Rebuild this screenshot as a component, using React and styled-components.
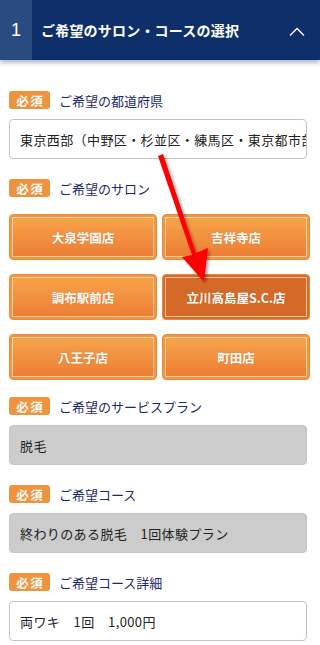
import React from "react";
import styled, { createGlobalStyle } from "styled-components";

const GlobalStyle = createGlobalStyle`
  html, body {
    margin: 0;
    padding: 0;
    background: #fff;
  }
  body {
    font-family: "Noto Sans CJK JP", "Liberation Sans", sans-serif;
  }
`;

const Page = styled.div`
  width: 320px;
  position: relative;
  overflow: hidden;
`;

const Header = styled.div`
  height: 60px;
  display: flex;
  align-items: center;
  background: #0f2f6b;
  color: #fff;
  box-shadow: 0 3px 4px rgba(40, 60, 110, 0.35);
  position: relative;
  z-index: 1;
`;

const Step = styled.div`
  width: 32px;
  height: 100%;
  display: flex;
  align-items: center;
  justify-content: center;
  background: #2a4b7f;
  font-family: "Liberation Sans", sans-serif;
  font-size: 18px;
`;

const Title = styled.div`
  flex: 1;
  padding-left: 9px;
  font-size: 14px;
  font-weight: 700;
  letter-spacing: 0.2px;
`;

const Chevron = styled.div`
  width: 46px;
  display: flex;
  justify-content: center;
  padding-top: 2px;
`;

const Body = styled.div`
  padding: 31px 13px 4px 9px;
  display: flex;
  flex-direction: column;
`;

const Field = styled.div`
  display: flex;
  flex-direction: column;
  margin-bottom: 20px;
`;

const LabelRow = styled.div`
  display: flex;
  align-items: center;
  gap: 9px;
  height: 18px;
  margin-bottom: 10px;
`;

const Badge = styled.span`
  width: 41px;
  height: 18px;
  border-radius: 3px;
  background: #f0933e;
  color: #fff;
  font-size: 12.5px;
  font-weight: 700;
  display: flex;
  align-items: center;
  justify-content: center;
  letter-spacing: 1.5px;
  text-indent: 1.5px;
`;

const LabelText = styled.span`
  color: #1c2a6b;
  font-size: 13px;
`;

const Box = styled.div`
  height: 40px;
  box-sizing: border-box;
  border: 1px solid ${(p) => (p.$disabled ? "#c6c6c6" : "#c4c4c4")};
  border-radius: 4px;
  background: ${(p) => (p.$disabled ? "#cccccc" : "#fff")};
  display: flex;
  align-items: center;
  padding-left: 10px;
  font-size: 13px;
  letter-spacing: 0.4px;
  color: #222;
  white-space: nowrap;
  overflow: hidden;
`;

const ButtonGrid = styled.div`
  display: grid;
  grid-template-columns: 1fr 1fr;
  column-gap: 5px;
  row-gap: 14px;
  margin-right: -3px;
  margin-top: 7px;
  margin-bottom: 17px;
`;

const SalonButton = styled.div`
  height: 46px;
  box-sizing: border-box;
  border-radius: 4px;
  border: 1px solid #ec8a3a;
  background: ${(p) =>
    p.$active ? "#d56a28" : "linear-gradient(#f7a64c, #ec7b34)"};
  box-shadow: inset 0 0 0 2px ${(p) => (p.$active ? "#d56a28" : "#f3973f")},
    inset 0 0 0 3px rgba(255, 230, 200, 0.75);
  color: #fff;
  font-size: 12.5px;
  font-weight: 700;
  display: flex;
  align-items: center;
  justify-content: center;
  text-shadow: 0 0 1px rgba(160, 70, 10, 0.4);
`;

const Arrow = styled.svg`
  position: absolute;
  left: 0;
  top: 0;
  pointer-events: none;
  z-index: 2;
`;

const salons = [
  { name: "大泉学園店" },
  { name: "吉祥寺店" },
  { name: "調布駅前店" },
  { name: "立川高島屋S.C.店", active: true },
  { name: "八王子店" },
  { name: "町田店" },
];

const Label = ({ children }) => (
  <LabelRow>
    <Badge>必須</Badge>
    <LabelText>{children}</LabelText>
  </LabelRow>
);

export default function App() {
  return (
    <Page>
      <GlobalStyle />
      <Header>
        <Step>1</Step>
        <Title>ご希望のサロン・コースの選択</Title>
        <Chevron>
          <svg width="16" height="9" viewBox="0 0 16 9">
            <path d="M1 8.5 L8 1.5 L15 8.5" stroke="#fff" strokeWidth="1.3" fill="none" />
          </svg>
        </Chevron>
      </Header>
      <Body>
        <Field>
          <Label>ご希望の都道府県</Label>
          <Box>東京西部（中野区・杉並区・練馬区・東京都市部）</Box>
        </Field>
        <Label>ご希望のサロン</Label>
        <ButtonGrid>
          {salons.map((s) => (
            <SalonButton key={s.name} $active={s.active}>
              {s.name}
            </SalonButton>
          ))}
        </ButtonGrid>
        <Field>
          <Label>ご希望のサービスプラン</Label>
          <Box $disabled>脱毛</Box>
        </Field>
        <Field>
          <Label>ご希望コース</Label>
          <Box $disabled>終わりのある脱毛　1回体験プラン</Box>
        </Field>
        <Field>
          <Label>ご希望コース詳細</Label>
          <Box>両ワキ　1回　1,000円</Box>
        </Field>
      </Body>
      <Arrow width="320" height="645" viewBox="0 0 320 645">
        <defs>
          <filter id="sh" x="-50%" y="-50%" width="200%" height="200%">
            <feDropShadow dx="2" dy="2" stdDeviation="1.5" floodColor="#000" floodOpacity="0.35" />
          </filter>
        </defs>
        <polygon
          points="158,156 163,154 196,253 208,248 204,282 182,257 192,255"
          fill="#ff0000"
          filter="url(#sh)"
        />
      </Arrow>
    </Page>
  );
}
